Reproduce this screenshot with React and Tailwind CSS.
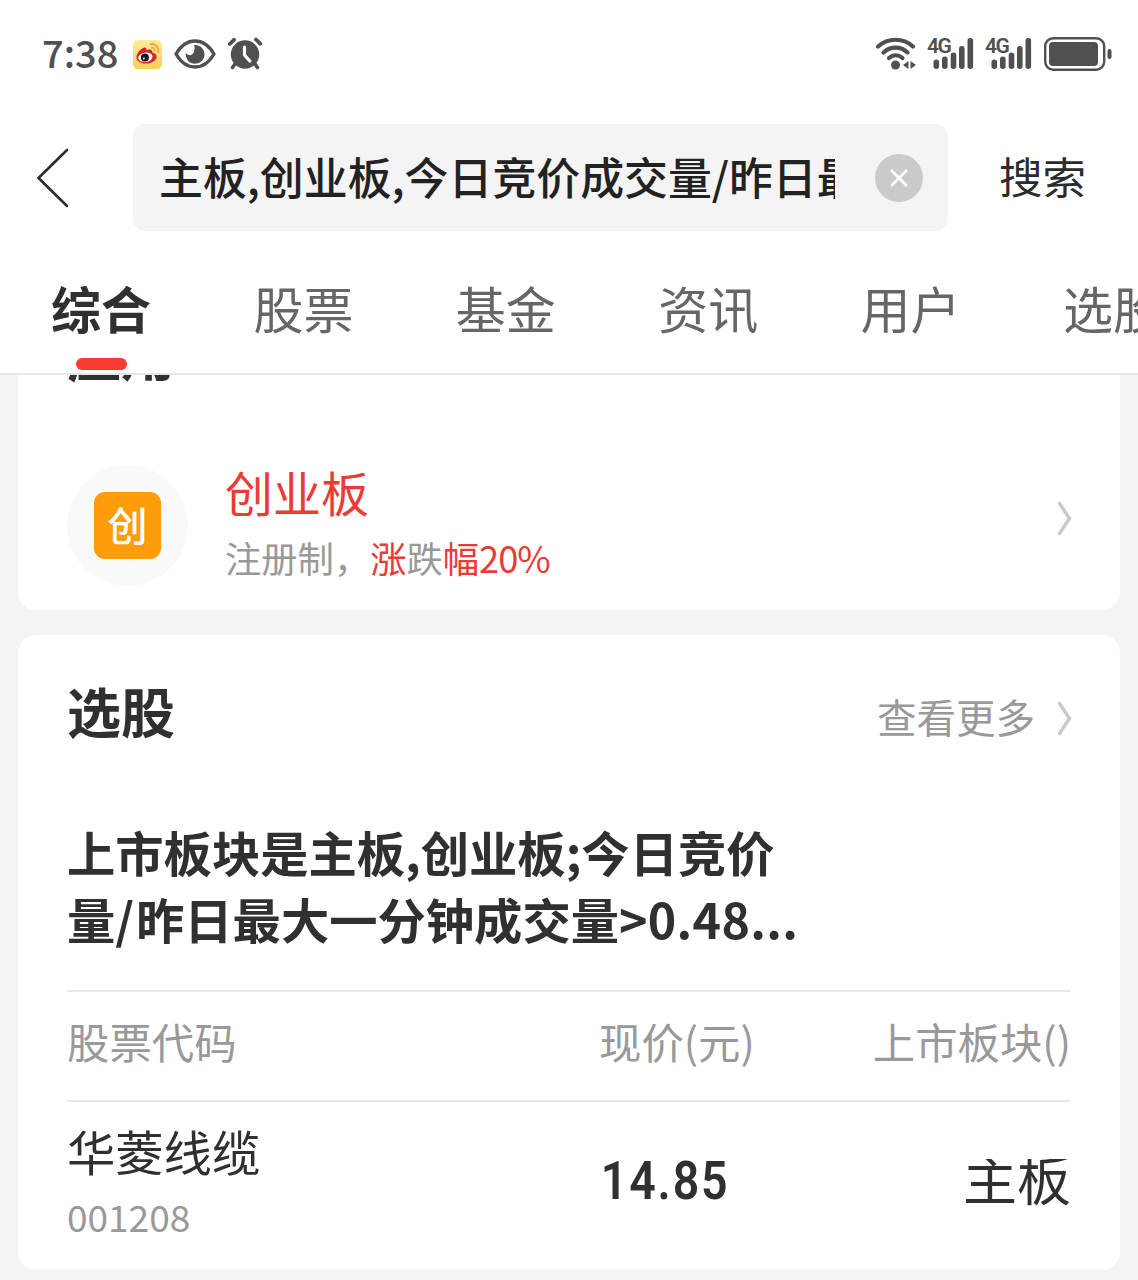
import React, { useState } from 'react';

const tabs = ['综合', '股票', '基金', '资讯', '用户', '选股'];

const stocks = [
  { code: '001208', name: '华菱线缆', price: '14.85', board: '主板' }
];

const WeiboIcon = () => (
  <svg width="29" height="29" viewBox="0 0 29 29" fill="none">
    <defs>
      <linearGradient id="weiboBg" x1="0" y1="0" x2="0" y2="1">
        <stop offset="0" stopColor="#fdeb9c" />
        <stop offset="1" stopColor="#f9cf55" />
      </linearGradient>
    </defs>
    <rect width="29" height="29" rx="5" fill="url(#weiboBg)" />
    <path
      d="M3.500 17.500C3.500 13 8 8 11.500 7.500C13.200 7.300 13.700 8.600 13.400 10.200C16 9 19.500 8.800 19.400 12.500C22.500 13.200 23.800 15 23.600 17C23.200 21 18 23.600 13 23.600C7.500 23.600 3.500 21 3.500 17.500Z"
      fill="#d8232a"
    />
    <ellipse cx="12.400" cy="17.300" rx="7.200" ry="4.700" fill="#fff" transform="rotate(-8 12.400 17.300)" />
    <circle cx="11.900" cy="17.500" r="4" fill="#151515" />
    <circle cx="10.800" cy="18.500" r="1" fill="#fff" />
    <path d="M17.500 4.200C22.500 3.200 26 7 25 12" stroke="#f0a43a" strokeWidth="1.800" strokeLinecap="round" />
    <path d="M18.500 7.800C20.700 7.400 22.200 9 21.700 11" stroke="#f0a43a" strokeWidth="1.500" strokeLinecap="round" />
  </svg>
);

const EyeIcon = () => (
  <svg width="42" height="30" viewBox="0 0 42 30" fill="none">
    <path
      d="M2 15C7 6.500 13.500 2 21 2C28.500 2 35 6.500 40 15C35 23.500 28.500 28 21 28C13.500 28 7 23.500 2 15Z"
      stroke="#505050"
      strokeWidth="3.400"
      strokeLinejoin="round"
    />
    <path
      d="M20 6C25.800 5.400 30.500 9.800 30.500 15.300C30.500 20.800 26.200 24.800 21 24.800C15.600 24.800 11.600 20.800 11.600 13.500C13.500 17 17.800 17.300 19.500 13.800C20.800 11 21 8.500 20 6Z"
      fill="#505050"
    />
  </svg>
);

const AlarmIcon = () => (
  <svg width="36" height="34" viewBox="0 0 36 34" fill="none">
    <circle cx="18" cy="17.500" r="14.200" fill="#505050" />
    <path d="M8 27L5.500 30.500M28 27L30.500 30.500" stroke="#505050" strokeWidth="3.600" strokeLinecap="round" />
    <path d="M2.800 7L7 2.800M29 2.500L33.200 6.700" stroke="#505050" strokeWidth="3.800" strokeLinecap="round" />
    <path d="M17.500 10V18L22.800 24" stroke="#fff" strokeWidth="3.200" strokeLinecap="round" strokeLinejoin="round" />
  </svg>
);

const WifiIcon = () => (
  <svg width="42" height="34" viewBox="0 0 42 34" fill="none">
    <g stroke="#505050" strokeWidth="4.200" strokeLinecap="round">
      <path d="M3 9.500C13 0.500 28 0.500 38 9.500" />
      <path d="M8.500 15.500C15.500 9 25.500 9 32.500 15.500" />
      <path d="M14 21C18 17.500 23.500 17.500 27.500 21" />
    </g>
    <circle cx="20.500" cy="28" r="4.500" fill="#505050" />
    <path d="M33.500 24V32L28 28ZM35.500 24V32L41 28Z" fill="#505050" />
  </svg>
);

const SignalIcon = () => (
  <div className="relative h-[34px] w-[47px]">
    <svg width="47" height="34" viewBox="0 0 47 34" fill="#505050">
      <rect x="6.500" y="22.500" width="5.600" height="9.500" rx="2.700" />
      <rect x="15" y="19.500" width="5.600" height="12.500" rx="2.700" />
      <rect x="23.700" y="15.500" width="5.600" height="16.500" rx="2.700" />
      <rect x="32" y="9" width="5.600" height="23" rx="2.700" />
      <rect x="40.500" y="1" width="5.600" height="31" rx="2.700" />
    </svg>
    <span className="absolute -top-[1px] left-0 font-['Roboto',sans-serif] text-[21px] leading-[20px] font-semibold tracking-[-1.500px] text-[#505050]">
      4G
    </span>
  </div>
);

const BatteryIcon = () => (
  <svg width="68" height="36" viewBox="0 0 68 36" fill="none">
    <rect x="1.200" y="2.200" width="59" height="31.500" rx="8" stroke="#505050" strokeWidth="2.400" />
    <rect x="5" y="6" width="49" height="24" rx="4" fill="#505050" />
    <rect x="63.500" y="13" width="4" height="10" rx="2" fill="#505050" />
  </svg>
);

const Chevron = () => (
  <svg width="15" height="35" viewBox="0 0 15 35" fill="none">
    <path d="M2.500 2.500L12.500 17.500L2.500 32.500" stroke="#c9c9c9" strokeWidth="3.400" strokeLinecap="round" />
  </svg>
);

const StatusBar = () => (
  <div className="flex h-[108px] items-center justify-between pr-[26px] pl-[42px]">
    <div className="flex items-center">
      <span className="w-[91px] pb-1 text-[38px] leading-none font-medium text-[#505050]">7:38</span>
      <WeiboIcon />
      <div className="ml-3">
        <EyeIcon />
      </div>
      <div className="ml-[11px]">
        <AlarmIcon />
      </div>
    </div>
    <div className="flex items-center">
      <WifiIcon />
      <div className="ml-[10px]">
        <SignalIcon />
      </div>
      <div className="ml-[11px]">
        <SignalIcon />
      </div>
      <div className="ml-[12px]">
        <BatteryIcon />
      </div>
    </div>
  </div>
);

const SearchBar = ({ keyword }) => (
  <div className="mt-4 flex h-[107px] items-center">
    <button className="w-[133px] pl-9">
      <svg width="34" height="60" viewBox="0 0 34 60" fill="none">
        <path d="M31 2L2.500 30L31 58" stroke="#2b2b2b" strokeWidth="2.600" strokeLinecap="round" />
      </svg>
    </button>
    <div className="flex h-full w-[815px] items-center rounded-xl bg-[#f4f4f4] pl-[26px]">
      <div className="w-[676px] overflow-hidden pb-[3px] text-[43.900px] leading-[60px] font-medium whitespace-nowrap text-[#222]">
        {keyword}
      </div>
      <div className="ml-10 flex h-12 w-12 items-center justify-center rounded-full bg-[#cacaca]">
        <svg width="20" height="20" viewBox="0 0 20 20" fill="none">
          <path d="M2 2L18 18M18 2L2 18" stroke="#fff" strokeWidth="2.600" />
        </svg>
      </div>
    </div>
    <button className="ml-[51px] pb-[3px] text-[43.500px] leading-none text-[#2b2b2b]">搜索</button>
  </div>
);

const App = () => {
  const [activeTab, setActiveTab] = useState('综合');

  return (
    <div className="h-[1280px] w-[1138px] overflow-hidden bg-[#f4f4f4] font-['Noto_Sans_CJK_SC',sans-serif] text-[#303030]">
      {/* Header */}
      <div className="h-[375px] overflow-hidden border-b-2 border-[#e7e7e7] bg-white">
        <StatusBar />
        <SearchBar keyword="主板,创业板,今日竞价成交量/昨日最" />
        <div className="flex pt-[51px] pl-[51px]">
          {tabs.map((tab) => (
            <button
              key={tab}
              onClick={() => setActiveTab(tab)}
              className="flex w-[202.400px] shrink-0 flex-col items-start"
            >
              <span
                className={
                  tab === activeTab
                    ? 'text-[50px] leading-none font-bold text-[#303030]'
                    : 'text-[50px] leading-none text-[#666]'
                }
              >
                {tab}
              </span>
              {tab === activeTab && <span className="mt-[26px] ml-[25px] h-3 w-[51px] rounded-full bg-[#fb3b34]" />}
            </button>
          ))}
        </div>
      </div>

      {/* App card */}
      <div className="mx-[18px] h-[235px] overflow-hidden rounded-b-[18px] bg-white pr-[48px] pl-[49px]">
        <h2 className="-mt-[48px] text-[54px] leading-none font-bold">应用</h2>
        <div className="mt-[84px] flex">
          <div className="flex h-[121px] w-[121px] items-center justify-center rounded-full bg-[#f9f9f9]">
            <div className="flex h-[67px] w-[67px] items-center justify-center rounded-[11px] bg-[#ff9c0a] pb-1 text-[40px] leading-none font-medium text-white">
              创
            </div>
          </div>
          <div className="ml-[37px] flex-1 pt-[2px]">
            <div className="text-[48px] leading-none text-[#ea3b36]">创业板</div>
            <div className="mt-6 text-[36.300px] leading-none text-[#999]">
              注册制，<span className="text-[#ea3b36]">涨</span>跌<span className="text-[#ea3b36]">幅</span>
              <span className="tracking-[-1px] text-[#ea3b36]">20%</span>
            </div>
          </div>
          <div className="mt-9">
            <Chevron />
          </div>
        </div>
      </div>

      {/* Stock picking card */}
      <div className="mx-[18px] mt-[25px] h-[635px] overflow-hidden rounded-[18px] bg-white pt-[48px] pr-[49px] pl-[49px]">
        <div className="-mr-px flex h-[54px] justify-between">
          <h2 className="pt-px text-[54px] leading-none font-bold">选股</h2>
          <div className="flex">
            <span className="mt-[13px] mr-[22px] text-[39.500px] leading-none text-[#999]">查看更多</span>
            <div className="mt-[18px]">
              <Chevron />
            </div>
          </div>
        </div>

        <p className="mt-[81px] text-[48.300px] leading-[67px] font-bold whitespace-nowrap">
          上市板块是主板,创业板;今日竞价
          <br />
          量<span className="tracking-[2px]">/</span>昨日最大一分钟成交量
          <span className="tracking-[0.300px]">&gt;0.48...</span>
        </p>

        <div className="mt-[38px] flex h-[112px] border-y-2 border-[#e8e8e8] pt-7 text-[42.400px] leading-none text-[#999]">
          <div className="w-[532px]">股票代码</div>
          <div>现价(元)</div>
          <div className="flex-1 text-right">上市板块()</div>
        </div>

        {stocks.map((stock) => (
          <div key={stock.code} className="flex">
            <div className="w-[532px] pt-6">
              <div className="text-[48.300px] leading-none">{stock.name}</div>
              <div className="mt-[24px] text-[37px] leading-none text-[#999]">{stock.code}</div>
            </div>
            <div className="w-[160px] origin-left scale-x-[0.860] pt-[52px] pl-[2px] font-['Roboto',sans-serif] text-[54px] leading-none font-semibold tracking-[2.200px]">
              {stock.price}
            </div>
            <div className="mt-[57px] h-[50px] flex-1 overflow-hidden text-right">
              <div className="-mt-2 text-[54px] leading-[54px]">{stock.board}</div>
            </div>
          </div>
        ))}
      </div>
    </div>
  );
};

export default App;
